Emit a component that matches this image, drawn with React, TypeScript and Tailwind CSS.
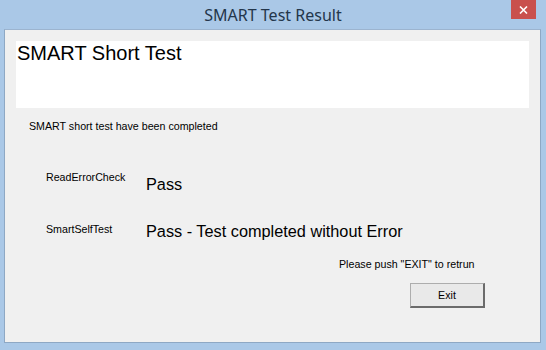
import React from "react";

const App = () => {
  return (
    <div className="w-[546px] h-[350px] bg-[#aac8e7] flex flex-col overflow-hidden">
      {/* ---------- title bar ---------- */}
      <div className="h-[29px] relative flex items-center justify-center shrink-0">
        <div className="text-[16px] text-[#23364b] pt-[1px]" style={{ fontFamily: '"Noto Sans", sans-serif' }}>
          SMART Test Result
        </div>
        <div className="absolute right-[10px] top-0 w-[25px] h-[19px] bg-[#c9504d] flex items-center justify-center">
          <svg width="9" height="8" viewBox="0 0 9 8">
            <path d="M1 0.5 L8 7.5 M8 0.5 L1 7.5" stroke="white" strokeWidth="1.6" />
          </svg>
        </div>
      </div>

      {/* ---------- client area ---------- */}
      <div
        className="ml-[4px] mr-[5px] h-[314px] bg-[#f0f0f0] border border-[#8ea8c4] border-t-[#9cb4cf] flex flex-col text-black"
        style={{ fontFamily: '"Liberation Sans", Arial, sans-serif' }}
      >
        <div className="mt-[11px] mx-[11px] h-[67px] bg-white pl-[1px] pt-[2px]">
          <div className="text-[20px] leading-none">SMART Short Test</div>
        </div>

        <div className="mt-[13px] ml-[24px] text-[10.67px] leading-none">SMART short test have been completed</div>

        {/* result rows */}
        <div className="mt-[40px] ml-[41px] flex items-start">
          <div className="w-[100px] text-[10.67px] leading-none">ReadErrorCheck</div>
          <div className="mt-[4px] text-[16.3px] leading-none">Pass</div>
        </div>
        <div className="mt-[31px] ml-[41px] flex items-start">
          <div className="w-[100px] mt-[1px] text-[10.67px] leading-none">SmartSelfTest</div>
          <div className="text-[16.3px] leading-none">Pass - Test completed without Error</div>
        </div>

        <div className="mt-[20px] ml-[334px] text-[10.67px] leading-none">Please push "EXIT" to retrun</div>

        <div className="mt-[13px] ml-[405px]">
          <button className="w-[75px] h-[25px] bg-[#e9e9e9] border border-[#adadad] border-r-[2px] border-b-[2px] border-r-[#6b6b6b] border-b-[#6b6b6b] text-[10.67px] flex items-center justify-center">
            Exit
          </button>
        </div>
      </div>
    </div>
  );
};

export default App;
